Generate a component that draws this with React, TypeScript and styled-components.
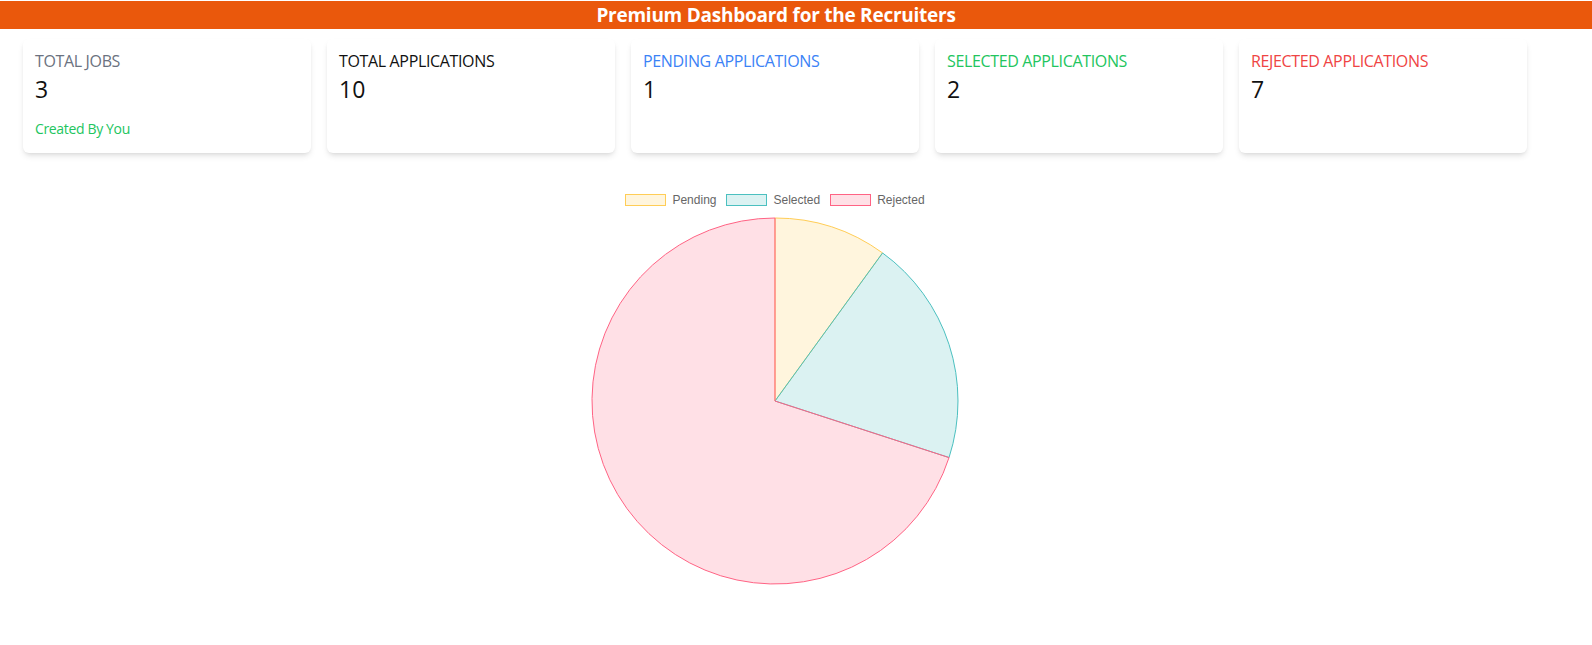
import React from "react";
import styled, { createGlobalStyle } from "styled-components";

const GlobalStyle = createGlobalStyle`
  * { box-sizing: border-box; }
  html, body { margin: 0; padding: 0; background: #ffffff; }
  body { font-family: "Open Sans", "Noto Sans", sans-serif; color: #111827; }
`;

const Page = styled.div`
  padding-top: 1px;
  min-height: 645px;
`;

const Header = styled.header`
  height: 28px;
  padding-right: 40px;
  background: #ea580c;
  color: #ffffff;
  font-weight: 700;
  font-size: 19px;
  line-height: 28px;
  text-align: center;
  letter-spacing: -0.25px;
`;

const Main = styled.main`
  padding: 10px 0 0 23px;
  width: 1527px;
`;

const CardRow = styled.div`
  display: flex;
  gap: 16px;
`;

const Card = styled.div`
  width: 288px;
  height: 114px;
  background: #ffffff;
  border-radius: 6px;
  box-shadow: 0 4px 6px -1px rgba(0, 0, 0, 0.1), 0 2px 4px -2px rgba(0, 0, 0, 0.1);
  padding: 10px 12px;
  display: flex;
  flex-direction: column;
`;

const CardTitle = styled.div<{ $color: string }>`
  color: ${(p) => p.$color};
  font-size: 16px;
  line-height: 24px;
  letter-spacing: -0.35px;
`;

const CardValue = styled.div`
  color: #111111;
  font-size: 23px;
  line-height: 32px;
`;

const CardNote = styled.div`
  margin-top: 14px;
  color: #22c55e;
  font-size: 14px;
  line-height: 20px;
  letter-spacing: -0.35px;
`;

const ChartSection = styled.section`
  margin-top: 32px;
  display: flex;
  flex-direction: column;
  align-items: center;
`;

const Legend = styled.div`
  display: flex;
  gap: 10px;
  margin: 9px 0 11px;
  height: 12px;
  align-items: center;
  font-family: "Liberation Sans", Arial, sans-serif;
  font-size: 12px;
  color: #666666;
`;

const LegendItem = styled.div`
  display: flex;
  align-items: center;
  gap: 6px;
  line-height: 12px;
`;

const LegendBox = styled.span<{ $border: string; $bg: string }>`
  width: 41px;
  height: 12px;
  border: 1px solid ${(p) => p.$border};
  background: ${(p) => p.$bg};
`;

const PieSvg = styled.svg`
  display: block;
  width: 368px;
  height: 368px;
`;

const stats = [
  { title: "TOTAL JOBS", value: "3", color: "#6b7280", note: "Created By You" },
  { title: "TOTAL APPLICATIONS", value: "10", color: "#111111" },
  { title: "PENDING APPLICATIONS", value: "1", color: "#3b82f6" },
  { title: "SELECTED APPLICATIONS", value: "2", color: "#22c55e" },
  { title: "REJECTED APPLICATIONS", value: "7", color: "#ef4444" },
];

const slices = [
  { label: "Pending", value: 1, border: "rgb(255, 205, 86)", bg: "rgba(255, 205, 86, 0.2)" },
  { label: "Selected", value: 2, border: "rgb(75, 192, 192)", bg: "rgba(75, 192, 192, 0.2)" },
  { label: "Rejected", value: 7, border: "rgb(255, 99, 132)", bg: "rgba(255, 99, 132, 0.2)" },
];

function buildPaths(cx: number, cy: number, r: number) {
  const total = slices.reduce((s, x) => s + x.value, 0);
  let start = 0;
  return slices.map((s) => {
    const sweep = (s.value / total) * Math.PI * 2;
    const end = start + sweep;
    const x1 = cx + r * Math.sin(start);
    const y1 = cy - r * Math.cos(start);
    const x2 = cx + r * Math.sin(end);
    const y2 = cy - r * Math.cos(end);
    const large = sweep > Math.PI ? 1 : 0;
    const d = `M${cx} ${cy} L${x1.toFixed(2)} ${y1.toFixed(2)} A${r} ${r} 0 ${large} 1 ${x2.toFixed(2)} ${y2.toFixed(2)} Z`;
    start = end;
    return { ...s, d };
  });
}

export default function App() {
  const paths = buildPaths(184, 184, 183);
  return (
    <Page>
      <GlobalStyle />
      <Header>Premium Dashboard for the Recruiters</Header>
      <Main>
        <CardRow>
          {stats.map((s) => (
            <Card key={s.title}>
              <CardTitle $color={s.color}>{s.title}</CardTitle>
              <CardValue>{s.value}</CardValue>
              {s.note && <CardNote>{s.note}</CardNote>}
            </Card>
          ))}
        </CardRow>
        <ChartSection>
          <Legend>
            {slices.map((s) => (
              <LegendItem key={s.label}>
                <LegendBox $border={s.border} $bg={s.bg} />
                <span>{s.label}</span>
              </LegendItem>
            ))}
          </Legend>
          <PieSvg viewBox="0 0 368 368">
            {paths.map((p) => (
              <path key={p.label} d={p.d} fill={p.bg} stroke={p.border} strokeWidth={1} strokeLinejoin="round" />
            ))}
          </PieSvg>
        </ChartSection>
      </Main>
    </Page>
  );
}
